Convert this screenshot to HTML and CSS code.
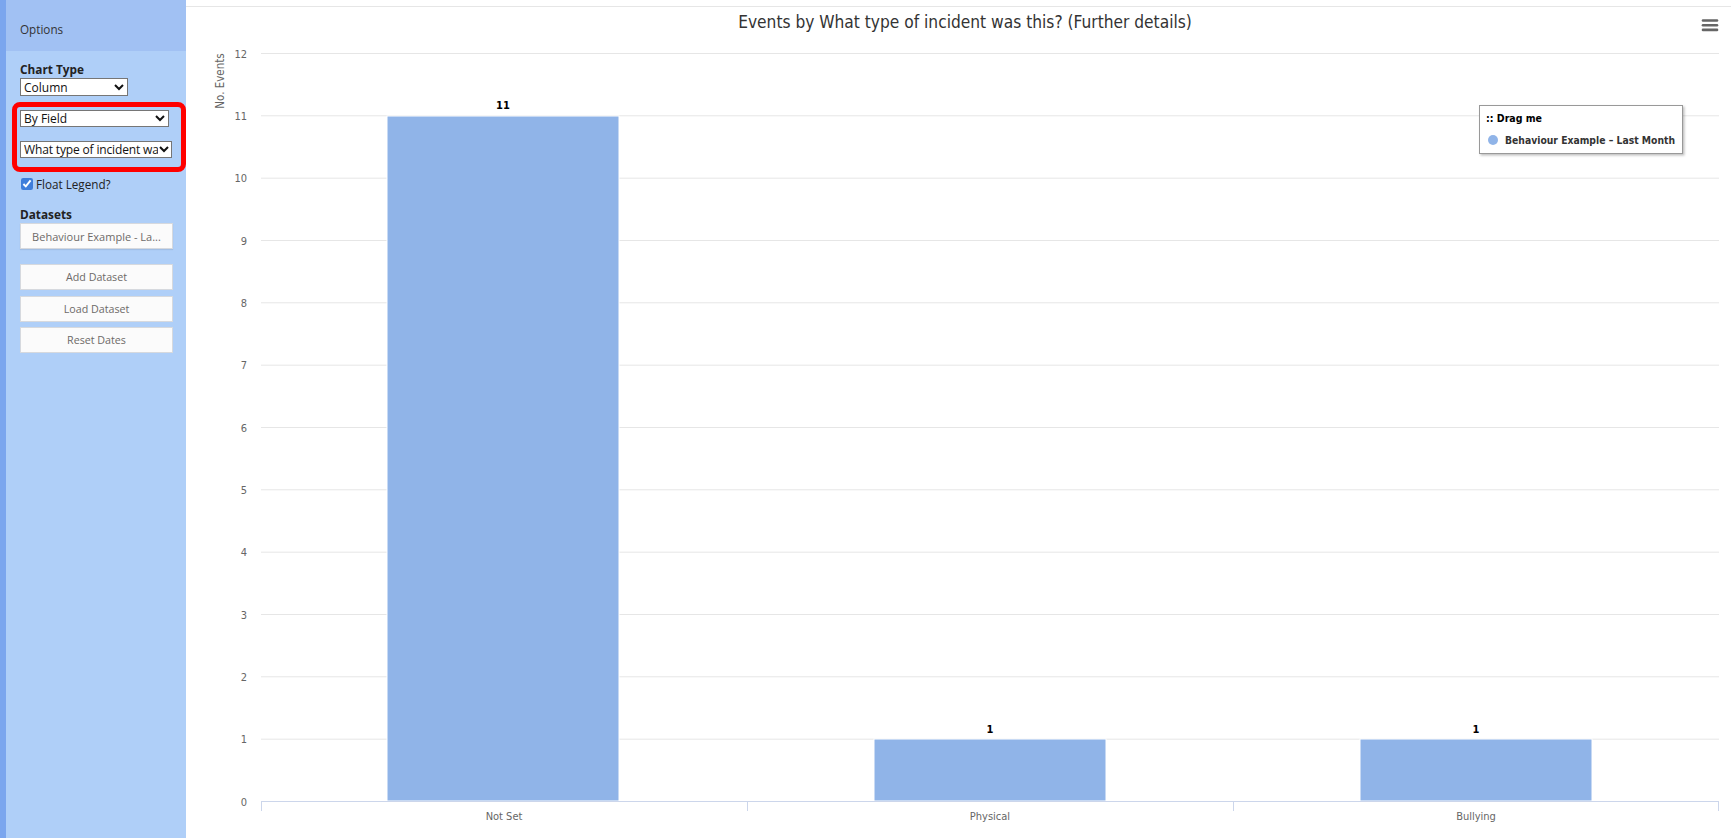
FILE: index.html
```html
<!DOCTYPE html>
<html>
<head>
<meta charset="utf-8">
<link rel="stylesheet" href="styles.css">
</head>
<body>
<div class="page">
  <aside class="sidebar">
    <div class="side-header">Options</div>
    <div class="side-body">
      <div class="label">Chart Type</div>
      <div class="select sel-type"><span class="sel-text">Column</span><svg class="chev" width="10" height="7" viewBox="0 0 10 7"><path d="M1 1 L5 5 L9 1" fill="none" stroke="#111" stroke-width="2"/></svg></div>
      <div class="highlight">
        <div class="select sel-by"><span class="sel-text">By Field</span><svg class="chev" width="10" height="7" viewBox="0 0 10 7"><path d="M1 1 L5 5 L9 1" fill="none" stroke="#111" stroke-width="2"/></svg></div>
        <div class="select sel-field"><span class="sel-text">What type of incident was this? (Further details)</span><svg class="chev" width="10" height="7" viewBox="0 0 10 7"><path d="M1 1 L5 5 L9 1" fill="none" stroke="#111" stroke-width="2"/></svg></div>
      </div>
      <label class="check-row"><input type="checkbox" checked class="check"><span>Float Legend?</span></label>
      <div class="label label-ds">Datasets</div>
      <div class="dataset">Behaviour Example - La...</div>
      <div class="buttons">
        <div class="btn">Add Dataset</div>
        <div class="btn">Load Dataset</div>
        <div class="btn">Reset Dates</div>
      </div>
    </div>
  </aside>
  <main class="main">
    <svg class="chart" width="1545" height="831" viewBox="186 7 1545 831">
      <text class="title" x="965" y="28" text-anchor="middle">Events by What type of incident was this? (Further details)</text>
      <g class="menu">
        <line x1="1703" y1="20.5" x2="1717" y2="20.5"/>
        <line x1="1703" y1="25.2" x2="1717" y2="25.2"/>
        <line x1="1703" y1="29.9" x2="1717" y2="29.9"/>
      </g>
      <g class="grid">
        <line x1="261" x2="1719" y1="53.5" y2="53.5"/>
        <line x1="261" x2="1719" y1="115.8" y2="115.8"/>
        <line x1="261" x2="1719" y1="178.2" y2="178.2"/>
        <line x1="261" x2="1719" y1="240.5" y2="240.5"/>
        <line x1="261" x2="1719" y1="302.8" y2="302.8"/>
        <line x1="261" x2="1719" y1="365.2" y2="365.2"/>
        <line x1="261" x2="1719" y1="427.5" y2="427.5"/>
        <line x1="261" x2="1719" y1="489.8" y2="489.8"/>
        <line x1="261" x2="1719" y1="552.2" y2="552.2"/>
        <line x1="261" x2="1719" y1="614.5" y2="614.5"/>
        <line x1="261" x2="1719" y1="676.8" y2="676.8"/>
        <line x1="261" x2="1719" y1="739.2" y2="739.2"/>
      </g>
      <g class="ylabels">
        <text x="247" y="57.5">12</text>
        <text x="247" y="119.8">11</text>
        <text x="247" y="182.2">10</text>
        <text x="247" y="244.5">9</text>
        <text x="247" y="306.8">8</text>
        <text x="247" y="369.2">7</text>
        <text x="247" y="431.5">6</text>
        <text x="247" y="493.8">5</text>
        <text x="247" y="556.2">4</text>
        <text x="247" y="618.5">3</text>
        <text x="247" y="680.8">2</text>
        <text x="247" y="743.2">1</text>
        <text x="247" y="805.5">0</text>
      </g>
      <text class="ytitle" transform="translate(224 81) rotate(-90)" text-anchor="middle">No. Events</text>
      <g class="bars">
        <rect x="387" y="116" width="232" height="685"/>
        <rect x="874" y="739" width="232" height="62"/>
        <rect x="1360" y="739" width="232" height="62"/>
      </g>
      <g class="datalabels">
        <text x="503" y="109">11</text>
        <text x="990" y="733">1</text>
        <text x="1476" y="733">1</text>
      </g>
      <line class="xaxis" x1="261" x2="1719" y1="801.5" y2="801.5"/>
      <g class="ticks">
        <line x1="261.5" x2="261.5" y1="801" y2="811"/>
        <line x1="747.5" x2="747.5" y1="801" y2="811"/>
        <line x1="1233.5" x2="1233.5" y1="801" y2="811"/>
        <line x1="1718.5" x2="1718.5" y1="801" y2="811"/>
      </g>
      <g class="xlabels">
        <text x="504" y="820">Not Set</text>
        <text x="990" y="820">Physical</text>
        <text x="1476" y="820">Bullying</text>
      </g>
      <defs>
        <filter id="shadow" x="-10%" y="-20%" width="130%" height="160%">
          <feDropShadow dx="1.5" dy="1.5" stdDeviation="1" flood-color="#000" flood-opacity="0.25"/>
        </filter>
      </defs>
      <rect class="legend" x="1479.5" y="105.5" width="203" height="48" filter="url(#shadow)"/>
      <text class="legend-title" x="1486" y="122">:: Drag me</text>
      <circle cx="1493" cy="140" r="5" fill="#90b4e8"/>
      <text class="legend-item" x="1505" y="144">Behaviour Example – Last Month</text>
    </svg>
  </main>
</div>
</body>
</html>
```

FILE: styles.css
```css
html, body {
  margin: 0;
  padding: 0;
  background: #ffffff;
}

.page {
  display: flex;
  width: 1731px;
  height: 838px;
  overflow: hidden;
}

.sidebar {
  width: 180px;
  flex: 0 0 180px;
  border-left: 6px solid #7ba6ee;
  background: #afcff8;
  font-family: "Open Sans", "Liberation Sans", sans-serif;
  font-size: 11.7px;
  color: #333;
}

.side-header {
  height: 30px;
  padding: 21px 0 0 14px;
  background: #a1c1f3;
  font-size: 11.7px;
  line-height: 17px;
  color: #333;
}

.side-body {
  padding: 10px 0 0 14px;
}

.label {
  font-weight: 700;
  font-size: 11.8px;
  line-height: 17px;
  color: #222;
}

.select {
  box-sizing: border-box;
  display: flex;
  align-items: center;
  background: #fff;
  border: 1px solid #767676;
  height: 18px;
  padding: 0 3px 0 3px;
  font-size: 12px;
  color: #111;
  overflow: hidden;
}

.sel-text {
  flex: 1;
  white-space: nowrap;
  overflow: hidden;
}

.chev {
  flex: 0 0 10px;
  margin-left: 1px;
}

.sel-type {
  width: 108px;
  margin-top: 0;
}

.highlight {
  box-sizing: border-box;
  width: 174px;
  margin: 6px 0 0 -8px;
  border: 5px solid #f00;
  border-radius: 8px;
  padding: 3px 0 9px 3px;
  display: flex;
  flex-direction: column;
  gap: 14px;
}

.sel-by {
  width: 149px;
  height: 17px;
}

.sel-field {
  width: 152px;
  height: 17px;
  padding-right: 2px;
}

.sel-field .sel-text {
  letter-spacing: -0.15px;
}

.check-row {
  display: flex;
  align-items: center;
  gap: 3px;
  margin-top: 4px;
  height: 16px;
  font-size: 11.7px;
  color: #222;
}

.check {
  margin: 0 0 0 1px;
  width: 12px;
  height: 12px;
  accent-color: #3d7ddb;
}

.label-ds {
  margin-top: 14px;
}

.dataset {
  box-sizing: border-box;
  width: 153px;
  height: 26px;
  margin-top: 0;
  background: #fbfbfb;
  border: 1px solid #d6d9de;
  box-shadow: 0 1px 1px rgba(0, 0, 0, 0.08);
  display: flex;
  align-items: center;
  justify-content: center;
  font-size: 11px;
  color: #6d6a68;
}

.buttons {
  margin-top: 15px;
  display: flex;
  flex-direction: column;
  gap: 5.5px;
}

.btn {
  box-sizing: border-box;
  width: 153px;
  height: 26px;
  background: #fbfbfb;
  border: 1px solid #d6d9de;
  display: flex;
  align-items: center;
  justify-content: center;
  font-size: 10.7px;
  color: #6d6a68;
}

.main {
  flex: 1;
  margin-top: 6px;
  border-top: 1px solid #e6e6e6;
  height: 831px;
}

.chart {
  display: block;
  font-family: "DejaVu Sans Condensed", "DejaVu Sans", sans-serif;
  font-stretch: condensed;
}

.title {
  font-size: 17.2px;
  fill: #333;
}

.menu line {
  stroke: #666;
  stroke-width: 2.6;
  stroke-linecap: round;
}

.grid line {
  stroke: #e6e6e6;
  stroke-width: 1;
}

.ylabels text {
  font-size: 11px;
  fill: #666;
  text-anchor: end;
}

.ytitle {
  font-size: 11.5px;
  fill: #666;
}

.bars rect {
  fill: #90b4e8;
  stroke: #ffffff;
  stroke-width: 1;
}

.datalabels text {
  font-size: 11px;
  font-weight: 700;
  fill: #000;
  text-anchor: middle;
}

.xaxis {
  stroke: #ccd6eb;
  stroke-width: 1;
}

.ticks line {
  stroke: #ccd6eb;
  stroke-width: 1;
}

.xlabels text {
  font-size: 11px;
  fill: #666;
  text-anchor: middle;
}

.legend {
  fill: #ffffff;
  stroke: #999;
  stroke-width: 1;
}

.legend-title {
  font-size: 10.5px;
  font-weight: 700;
  fill: #000;
}

.legend-item {
  font-size: 10.3px;
  font-weight: 700;
  fill: #333;
}
```
